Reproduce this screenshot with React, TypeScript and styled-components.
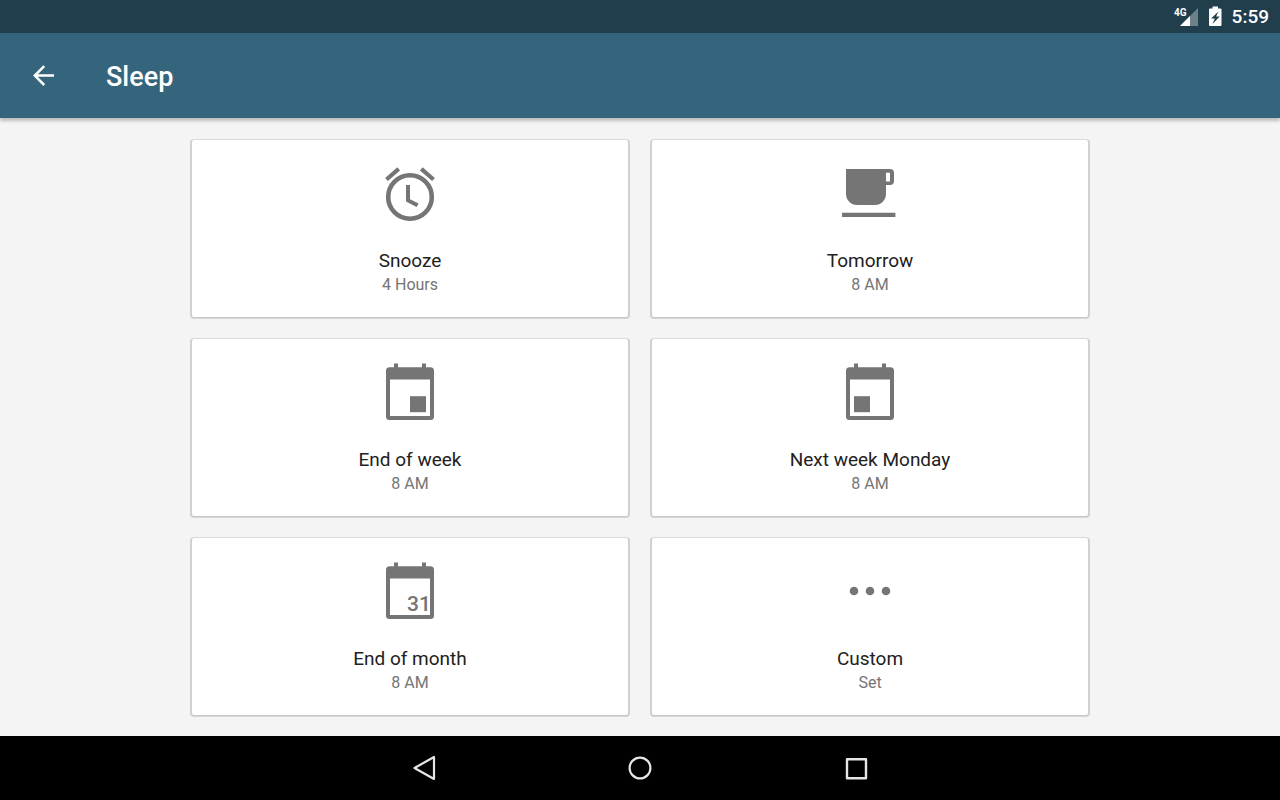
import React from "react";
import styled, { createGlobalStyle } from "styled-components";

const GlobalStyle = createGlobalStyle`
  *, *::before, *::after { box-sizing: border-box; }
  body { margin: 0; background: #f4f4f4; font-family: Roboto, "Noto Sans", sans-serif; }
  button { font: inherit; border: 0; padding: 0; cursor: pointer; }
  svg { display: block; }
`;

const Screen = styled.div`
  display: flex;
  flex-direction: column;
  min-height: 100vh;
`;

const StatusBar = styled.div`
  display: flex;
  justify-content: flex-end;
  align-items: center;
  height: 33px;
  padding-right: 11px;
  background: #213e4c;
  color: #fff;
`;

const Clock = styled.time`
  margin-left: 10px;
  font-size: 19px;
  font-weight: 500;
  line-height: 33px;
`;

const AppBar = styled.header`
  display: flex;
  align-items: center;
  height: 85px;
  padding-left: 22px;
  background: #35657c;
  color: #fff;
  box-shadow: 0 3px 3px rgba(0, 0, 0, 0.22);
`;

const BackButton = styled.button`
  display: grid;
  place-items: center;
  width: 44px;
  height: 44px;
  background: none;
  color: inherit;
`;

const Title = styled.h1`
  margin: 0 0 0 40px;
  padding-top: 2px;
  font-size: 27px;
  font-weight: 500;
  line-height: 32px;
`;

const Main = styled.main`
  flex: 1;
  padding: 21px 20px 20px;
`;

const Grid = styled.div`
  display: grid;
  grid-template-columns: repeat(2, minmax(0, 1fr));
  gap: 20px;
  max-width: 900px;
  margin: 0 auto;
`;

const Card = styled.button`
  display: flex;
  flex-direction: column;
  align-items: center;
  padding: 21px 20px 20px;
  border: solid;
  border-color: #dadada #d0d0d0 #c8c8c8;
  border-width: 1px 2px 1px;
  border-radius: 4px;
  background: #fff;
  box-shadow: 0 1px 0 #d6d6d6;
  color: #757575;
`;

const CardIcon = styled.svg`
  width: 64px;
  height: 64px;
`;

const CardTitle = styled.span`
  margin-top: 24px;
  font-size: 19px;
  line-height: 24px;
  color: #212121;
`;

const CardDetail = styled.span`
  font-size: 16px;
  line-height: 24px;
`;

const NavBar = styled.nav`
  display: flex;
  justify-content: center;
  height: 64px;
  background: #000;
`;

const NavButton = styled.button`
  display: grid;
  place-items: center;
  width: 216px;
  background: none;
  color: #e6e6e6;
`;

const AlarmIcon = () => (
  <CardIcon viewBox="0 0 64 64" fill="currentColor" aria-hidden="true">
    <circle cx="32" cy="36" r="21.8" fill="none" stroke="currentColor" strokeWidth="4.6" />
    <path d="M8.5 18.5 20.7 7.9M55.5 18.5 43.3 7.9" stroke="currentColor" strokeWidth="4.2" />
    <path d="M28 24h4v14.2l8.6 4.4-2 3.4L28 40.4z" />
  </CardIcon>
);

const CupIcon = () => (
  <CardIcon viewBox="0 0 64 64" fill="currentColor" aria-hidden="true">
    <path
      fillRule="evenodd"
      d="M8 8H52a4 4 0 0 1 4 4V20a4 4 0 0 1-4 4H48V33A11 11 0 0 1 37 44H19A11 11 0 0 1 8 33ZM48 11.8V20.6H52V11.8Z"
    />
    <path d="M4 51.8H57.4V56H4z" />
  </CardIcon>
);

const CalendarIcon = ({ children }: { children: React.ReactNode }) => (
  <CardIcon viewBox="0 0 64 64" fill="currentColor" aria-hidden="true">
    <path
      fillRule="evenodd"
      d="M16 3.6h4V7.2H44V3.6h4V7.2H52.5A3.5 3.5 0 0 1 56 10.7V56.5A3.5 3.5 0 0 1 52.5 60H11.5A3.5 3.5 0 0 1 8 56.5V10.7A3.5 3.5 0 0 1 11.5 7.2H16ZM12 19.6V56H52V19.6Z"
    />
    {children}
  </CardIcon>
);

const DotsIcon = () => (
  <CardIcon viewBox="0 0 64 64" fill="currentColor" aria-hidden="true">
    <circle cx="16" cy="32" r="4.3" />
    <circle cx="32" cy="32" r="4.3" />
    <circle cx="48" cy="32" r="4.3" />
  </CardIcon>
);

const options = [
  { title: "Snooze", detail: "4 Hours", icon: <AlarmIcon /> },
  { title: "Tomorrow", detail: "8 AM", icon: <CupIcon /> },
  {
    title: "End of week",
    detail: "8 AM",
    icon: <CalendarIcon><path d="M32 36.2h16v16H32z" /></CalendarIcon>,
  },
  {
    title: "Next week Monday",
    detail: "8 AM",
    icon: <CalendarIcon><path d="M16 36.2h16v16H16z" /></CalendarIcon>,
  },
  {
    title: "End of month",
    detail: "8 AM",
    icon: (
      <CalendarIcon>
        <text x="29" y="52" fontFamily="Roboto, sans-serif" fontSize="21" fontWeight="500">31</text>
      </CalendarIcon>
    ),
  },
  { title: "Custom", detail: "Set", icon: <DotsIcon /> },
];

export default function App() {
  return (
    <Screen>
      <GlobalStyle />
      <StatusBar>
        <svg width="48" height="24" viewBox="0 0 48 24" fill="#fff" aria-hidden="true">
          <path d="M24 3V21H6z" fillOpacity="0.35" />
          <path d="M16 11V21H6z" />
          <text x="0" y="11" fontFamily="Roboto, sans-serif" fontSize="10" fontWeight="700">4G</text>
          <path
            fillRule="evenodd"
            d="M38.5 1.5h5.500V3.5H46.5a1 1 0 0 1 1 1V20a1 1 0 0 1-1 1H36a1 1 0 0 1-1-1V4.5a1 1 0 0 1 1-1h2.500ZM44.5 6.5 37 13.5h3.800L38.500 19 45.700 11.500h-3.600Z"
          />
        </svg>
        <Clock>5:59</Clock>
      </StatusBar>
      <AppBar>
        <BackButton aria-label="Back">
          <svg width="22" height="22" viewBox="0 0 22 22" fill="none" stroke="currentColor" strokeWidth="2.5" aria-hidden="true">
            <path d="M21 10.6H2M11.200 1.200 1.800 10.600l9.400 9.400" />
          </svg>
        </BackButton>
        <Title>Sleep</Title>
      </AppBar>
      <Main>
        <Grid>
          {options.map((o) => (
            <Card key={o.title}>
              {o.icon}
              <CardTitle>{o.title}</CardTitle>
              <CardDetail>{o.detail}</CardDetail>
            </Card>
          ))}
        </Grid>
      </Main>
      <NavBar>
        <NavButton aria-label="Back">
          <svg width="24" height="26" viewBox="0 0 24 26" fill="none" stroke="currentColor" strokeWidth="2.2" strokeLinejoin="round" aria-hidden="true">
            <path d="M22 2V24L2.5 13z" />
          </svg>
        </NavButton>
        <NavButton aria-label="Home">
          <svg width="24" height="24" viewBox="0 0 24 24" fill="none" stroke="currentColor" strokeWidth="2.2" aria-hidden="true">
            <circle cx="12" cy="12" r="10.4" />
          </svg>
        </NavButton>
        <NavButton aria-label="Recent apps">
          <svg width="24" height="24" viewBox="0 0 24 24" fill="none" stroke="currentColor" strokeWidth="2.4" strokeLinejoin="round" aria-hidden="true">
            <path d="M3 3.2H22V22.2H3z" />
          </svg>
        </NavButton>
      </NavBar>
    </Screen>
  );
}
